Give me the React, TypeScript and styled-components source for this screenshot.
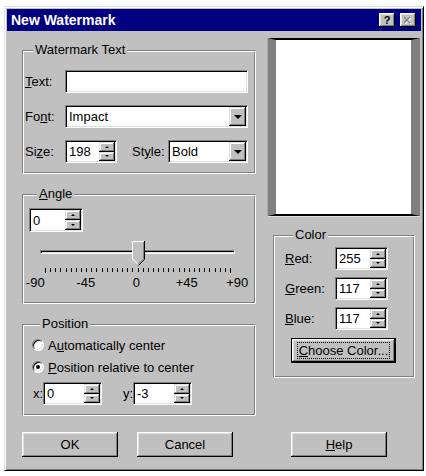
import React from 'react';
import styled, { createGlobalStyle } from 'styled-components';

const GlobalStyle = createGlobalStyle`
  html, body {
    margin: 0;
    padding: 0;
    background: #ffffff;
  }
  body {
    font-family: 'Liberation Sans', Arial, sans-serif;
    font-size: 13px;
    color: #000;
  }
`;

const Window = styled.div`
  box-sizing: border-box;
  margin: 6px 0 0 4px;
  width: 420px;
  height: 465px;
  padding: 2px;
  display: flex;
  flex-direction: column;
  background: #c0c0c0;
  border: 1px solid;
  border-color: #dfdfdf #000 #000 #dfdfdf;
  box-shadow: inset 1px 1px #fff, inset -1px -1px #808080;
`;

const TitleBar = styled.div`
  height: 22px;
  flex: none;
  display: flex;
  align-items: center;
  padding: 0 5px 0 4px;
  background: #000080;
`;

const Title = styled.div`
  flex: 1;
  color: #fff;
  font-weight: bold;
  font-size: 14px;
`;

const TitleButtons = styled.div`
  display: flex;
  gap: 5px;
`;

const TitleButton = styled.div<{ $disabled?: boolean }>`
  box-sizing: border-box;
  width: 16px;
  height: 14px;
  display: flex;
  align-items: center;
  justify-content: center;
  background: #c0c0c0;
  box-shadow: inset -1px -1px #000, inset 1px 1px #fff, inset -2px -2px #808080, inset 2px 2px #dfdfdf;
  font-weight: bold;
  font-size: 11px;
  line-height: 1;
  color: ${(p) => (p.$disabled ? '#808080' : '#000')};
`;

const Client = styled.div`
  flex: 1;
  display: grid;
  grid-template-columns: 234px 152px;
  column-gap: 12px;
  row-gap: 16px;
  align-content: start;
  padding: 7px 0 0 15px;
`;

const Column = styled.div<{ $gap: number; $top?: number }>`
  display: flex;
  flex-direction: column;
  gap: ${(p) => p.$gap}px;
  margin-top: ${(p) => p.$top ?? 0}px;
`;

const Group = styled.fieldset<{ $pad: string; $gap?: number }>`
  margin: 0;
  min-width: 0;
  display: flex;
  flex-direction: column;
  gap: ${(p) => p.$gap ?? 0}px;
  padding: ${(p) => p.$pad};
  border: 1px solid;
  border-color: #808080 #fff #fff #808080;
  box-shadow: inset 1px 1px #fff, inset -1px -1px #808080;
`;

const Legend = styled.legend`
  margin-left: 8px;
  padding: 0 2px;
  line-height: 14px;
  background: #c0c0c0;
`;

const Row = styled.div<{ $gap?: number }>`
  display: flex;
  align-items: center;
  gap: ${(p) => p.$gap ?? 0}px;
`;

const Label = styled.span<{ $w?: number; $ml?: number }>`
  flex: none;
  width: ${(p) => (p.$w ? `${p.$w}px` : 'auto')};
  margin-left: ${(p) => p.$ml ?? 0}px;
  white-space: nowrap;
`;

const Field = styled.div<{ $w?: number; $h?: number }>`
  box-sizing: border-box;
  display: flex;
  align-items: stretch;
  flex: ${(p) => (p.$w ? 'none' : '1')};
  width: ${(p) => (p.$w ? `${p.$w}px` : 'auto')};
  height: ${(p) => p.$h ?? 23}px;
  padding: 1px;
  background: #fff;
  border: 1px solid;
  border-color: #808080 #fff #fff #808080;
  box-shadow: inset 1px 1px #000, inset -1px -1px #dfdfdf;
`;

const Value = styled.span`
  flex: 1;
  display: flex;
  align-items: center;
  padding-left: 2px;
  white-space: nowrap;
  overflow: hidden;
`;

const Raised = styled.div`
  box-sizing: border-box;
  display: flex;
  align-items: center;
  justify-content: center;
  background: #c0c0c0;
  box-shadow: inset -1px -1px #000, inset 1px 1px #dfdfdf, inset -2px -2px #808080, inset 2px 2px #fff;
`;

const SpinStack = styled.div`
  width: 16px;
  display: flex;
  flex-direction: column;
`;

const SpinButton = styled(Raised)`
  flex: 1;
`;

const DropButton = styled(Raised)`
  width: 17px;
`;

const Arrow = styled.span<{ $dir: 'up' | 'down'; $size: number }>`
  width: 0;
  height: 0;
  border-left: ${(p) => p.$size}px solid transparent;
  border-right: ${(p) => p.$size}px solid transparent;
  ${(p) =>
    p.$dir === 'up'
      ? `border-bottom: ${p.$size}px solid #000;`
      : `border-top: ${p.$size}px solid #000;`}
`;

const Spinner = ({ w, h, value }: { w: number; h?: number; value: string }) => (
  <Field $w={w} $h={h}>
    <Value>{value}</Value>
    <SpinStack>
      <SpinButton>
        <Arrow $dir="up" $size={2} />
      </SpinButton>
      <SpinButton>
        <Arrow $dir="down" $size={2} />
      </SpinButton>
    </SpinStack>
  </Field>
);

const Combo = ({ w, value }: { w?: number; value: string }) => (
  <Field $w={w}>
    <Value>{value}</Value>
    <DropButton>
      <Arrow $dir="down" $size={4} />
    </DropButton>
  </Field>
);

const SliderBox = styled.div`
  position: relative;
  height: 34px;
  margin-top: 9px;
`;

const Track = styled.div`
  position: absolute;
  left: 11px;
  top: 9px;
  width: 195px;
  height: 4px;
  box-sizing: border-box;
  border-top: 1px solid #808080;
  border-left: 1px solid #808080;
  border-bottom: 1px solid #fff;
  border-right: 1px solid #fff;
  box-shadow: inset 1px 1px #000, inset -1px -1px #dfdfdf;
`;

const Thumb = styled.svg`
  position: absolute;
  left: 103px;
  top: 0;
`;

const Ticks = styled.svg`
  position: absolute;
  left: 0;
  top: 27px;
`;

const ScaleLabels = styled.div`
  display: flex;
  margin-left: -19px;
  line-height: 16px;
`;

const ScaleLabel = styled.span`
  width: 50.5px;
  flex: none;
  text-align: center;
`;

const Radio = styled.span<{ $checked?: boolean }>`
  box-sizing: border-box;
  width: 12px;
  height: 12px;
  flex: none;
  display: flex;
  align-items: center;
  justify-content: center;
  border-radius: 50%;
  background: #fff;
  border: 1px solid;
  border-color: #808080 #fff #fff #808080;
  box-shadow: inset 1px 1px #000, inset -1px -1px #dfdfdf;
  &::after {
    content: '';
    display: ${(p) => (p.$checked ? 'block' : 'none')};
    width: 4px;
    height: 4px;
    border-radius: 50%;
    background: #000;
  }
`;

const RadioRow = styled.div`
  display: flex;
  align-items: center;
  gap: 4px;
  height: 18px;
`;

const Preview = styled.div`
  box-sizing: border-box;
  height: 178px;
  background: #fff;
  border-top: 2px solid #000;
  border-bottom: 2px solid #000;
  border-left: 8px solid #808080;
  border-right: 9px solid #808080;
  box-shadow: -1px 0 #a8a8a8, 0 1px #dfdfdf;
`;

const Button = styled.div<{ $w: number; $default?: boolean; $ml?: number }>`
  box-sizing: border-box;
  width: ${(p) => p.$w}px;
  height: 25px;
  margin-left: ${(p) => p.$ml ?? 0}px;
  display: flex;
  align-items: center;
  justify-content: center;
  background: #c0c0c0;
  ${(p) => (p.$default ? 'border: 1px solid #000;' : '')}
  box-shadow: inset -1px -1px #000, inset 1px 1px #fff, inset -2px -2px #808080, inset 2px 2px #dfdfdf;
`;

const Focus = styled.span`
  outline: 1px dotted #000;
  padding: 0 1px;
  line-height: 15px;
`;

const ButtonRow = styled.div<{ $gap?: number }>`
  display: flex;
  gap: ${(p) => p.$gap ?? 0}px;
`;

const tickXs = Array.from({ length: 37 }, (_, i) => Math.round(16 + (i * 185) / 36));

export default function App() {
  return (
    <>
      <GlobalStyle />
      <Window>
        <TitleBar>
          <Title>New Watermark</Title>
          <TitleButtons>
            <TitleButton>?</TitleButton>
            <TitleButton $disabled>
              <svg width="8" height="7" viewBox="0 0 8 7">
                <path d="M1 1 L7 7 M7 1 L1 7" stroke="#fff" strokeWidth="1.4" />
                <path d="M0 0 L6 6 M6 0 L0 6" stroke="#808080" strokeWidth="1.4" />
              </svg>
            </TitleButton>
          </TitleButtons>
        </TitleBar>
        <Client>
          <Column $gap={13} $top={5}>
            <Group $pad="13px 7px 10px 2px" $gap={12}>
              <Legend>Watermark Text</Legend>
              <Row>
                <Label $w={40}>
                  <u>T</u>ext:
                </Label>
                <Field />
              </Row>
              <Row>
                <Label $w={40}>
                  Fo<u>n</u>t:
                </Label>
                <Combo value="Impact" />
              </Row>
              <Row>
                <Label $w={40}>
                  Si<u>z</u>e:
                </Label>
                <Spinner w={52} value="198" />
                <Label $w={36} $ml={15}>
                  St<u>y</u>le:
                </Label>
                <Combo w={80} value="Bold" />
              </Row>
            </Group>
            <Group $pad="7px 6px 12px 6px">
              <Legend>
                <u>A</u>ngle
              </Legend>
              <Spinner w={54} h={24} value="0" />
              <SliderBox>
                <Track />
                <Thumb width="13" height="25" viewBox="0 0 13 25">
                  <polygon points="0,0 12,0 12,18 6,24 0,18" fill="#c0c0c0" />
                  <polyline points="0.5,18 0.5,0.5 12,0.5" fill="none" stroke="#fff" />
                  <line x1="0.5" y1="18" x2="6" y2="23.5" stroke="#fff" />
                  <polyline points="12.5,0 12.5,18.3 6.3,24.5" fill="none" stroke="#000" />
                  <polyline points="11.5,1 11.5,18 6,23.3" fill="none" stroke="#808080" />
                </Thumb>
                <Ticks width="220" height="7" viewBox="0 0 220 7" shapeRendering="crispEdges">
                  {tickXs.map((x, i) => (
                    <rect key={i} x={x} y={0} width={1} height={i === 0 || i === 36 ? 5 : 4} fill="#000" />
                  ))}
                </Ticks>
              </SliderBox>
              <ScaleLabels>
                <ScaleLabel>-90</ScaleLabel>
                <ScaleLabel>-45</ScaleLabel>
                <ScaleLabel>0</ScaleLabel>
                <ScaleLabel>+45</ScaleLabel>
                <ScaleLabel>+90</ScaleLabel>
              </ScaleLabels>
            </Group>
            <Group $pad="5px 9px 10px 9px" $gap={4}>
              <Legend>Position</Legend>
              <RadioRow>
                <Radio />
                <span>
                  A<u>u</u>tomatically center
                </span>
              </RadioRow>
              <RadioRow>
                <Radio $checked />
                <span>
                  <u>P</u>osition relative to center
                </span>
              </RadioRow>
              <Row style={{ marginTop: 2 }}>
                <Label $w={10} $ml={1}>
                  x:
                </Label>
                <Spinner w={59} value="0" />
                <Label $w={10} $ml={21}>
                  y:
                </Label>
                <Spinner w={59} value="-3" />
              </Row>
            </Group>
          </Column>
          <Column $gap={12}>
            <Preview />
            <Group $pad="5px 11px 14px 11px" $gap={7} style={{ margin: '0 5px' }}>
              <Legend>Color</Legend>
              <Row>
                <Label $w={50}>
                  <u>R</u>ed:
                </Label>
                <Spinner w={53} value="255" />
              </Row>
              <Row>
                <Label $w={50}>
                  <u>G</u>reen:
                </Label>
                <Spinner w={53} value="117" />
              </Row>
              <Row>
                <Label $w={50}>
                  <u>B</u>lue:
                </Label>
                <Spinner w={53} value="117" />
              </Row>
              <Button $w={105} $ml={6} $default style={{ marginTop: 1 }}>
                <Focus>
                  <u>C</u>hoose Color...
                </Focus>
              </Button>
            </Group>
          </Column>
          <ButtonRow $gap={19}>
            <Button $w={96}>OK</Button>
            <Button $w={96}>Cancel</Button>
          </ButtonRow>
          <ButtonRow>
            <Button $w={96} $ml={23}>
              <u>H</u>elp
            </Button>
          </ButtonRow>
        </Client>
      </Window>
    </>
  );
}
